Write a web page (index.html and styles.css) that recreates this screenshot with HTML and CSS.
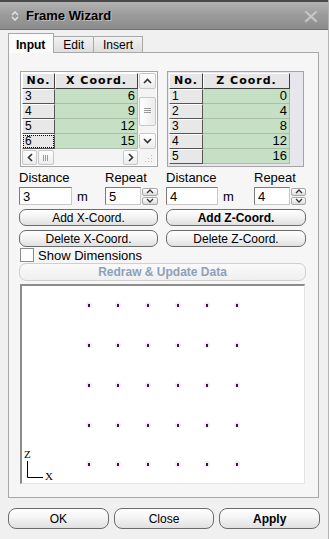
FILE: index.html
```html
<!DOCTYPE html>
<html>
    <head>
        <meta charset="utf-8" />
        <title>Frame Wizard</title>
        <link rel="stylesheet" href="styles.css">
    </head>
    <body>
        <div class="window">
            <div class="titlebar">
                <svg class="title-icon" width="8" height="12" viewBox="0 0 8 12">
                    <polyline points="1,5 4,2 7,5" fill="none" stroke="#e8e8e8" stroke-width="1.4" />
                    <polyline points="1,7 4,10 7,7" fill="none" stroke="#e8e8e8" stroke-width="1.4" />
                </svg>
                <span class="title">Frame Wizard</span>
                <svg class="title-close" width="14" height="13" viewBox="0 0 14 13">
                    <path d="M2,2 L12,11 M12,2 L2,11" stroke="#b8b8b8" stroke-width="2.6" stroke-linecap="square" />
                    <path d="M2,2 L12,11 M12,2 L2,11" stroke="#d4d4d4" stroke-width="1" />
                </svg>
            </div>

            <div class="tabs">
                <div class="tab selected">Input</div>
                <div class="tab">Edit</div>
                <div class="tab">Insert</div>
            </div>

            <div class="panel">
                <div class="columns">
                    <div class="col">
                        <div class="grid grid-x">
                            <div class="hcell">No.</div>
                            <div class="hcell">X Coord.</div>
                            <div class="vscroll">
                                <div class="sbtn">
                                    <svg width="9" height="6" viewBox="0 0 9 6"><polyline points="1,5 4.5,1.5 8,5" fill="none" stroke="#333" stroke-width="1.6" /></svg>
                                </div>
                                <div class="strack">
                                    <div class="sthumb">
                                        <svg width="7" height="6" viewBox="0 0 7 6"><path d="M0,0.5h7M0,2.5h7M0,4.5h7" stroke="#999" /></svg>
                                    </div>
                                </div>
                                <div class="sbtn">
                                    <svg width="9" height="6" viewBox="0 0 9 6"><polyline points="1,1 4.5,4.5 8,1" fill="none" stroke="#333" stroke-width="1.6" /></svg>
                                </div>
                            </div>
                            <div class="ncell">3</div><div class="vcell">6</div>
                            <div class="ncell">4</div><div class="vcell">9</div>
                            <div class="ncell">5</div><div class="vcell">12</div>
                            <div class="ncell focus">6</div><div class="vcell">15</div>
                            <div class="hscroll">
                                <div class="sbtn">
                                    <svg width="6" height="9" viewBox="0 0 6 9"><polyline points="5,1 1.5,4.5 5,8" fill="none" stroke="#333" stroke-width="1.6" /></svg>
                                </div>
                                <div class="hthumb">
                                    <svg width="6" height="6" viewBox="0 0 6 6"><path d="M0.5,0v6M2.5,0v6M4.5,0v6" stroke="#999" /></svg>
                                </div>
                                <div class="htrack"></div>
                                <div class="sbtn">
                                    <svg width="6" height="9" viewBox="0 0 6 9"><polyline points="1,1 4.5,4.5 1,8" fill="none" stroke="#333" stroke-width="1.6" /></svg>
                                </div>
                            </div>
                            <div class="grip">
                                <svg width="8" height="8" viewBox="0 0 8 8">
                                    <path d="M6,1h1v1h-1zM3,4h1v1h-1zM6,4h1v1h-1zM0,7h1v1h-1zM3,7h1v1h-1zM6,7h1v1h-1z" fill="#c0c0c0" />
                                </svg>
                            </div>
                        </div>

                        <div class="fields">
                            <span class="lbl wide">Distance</span>
                            <span class="lbl wide">Repeat</span>
                            <input class="field" type="text" value="3">
                            <span class="unit">m</span>
                            <input class="field" type="text" value="5">
                            <div class="spin">
                                <div class="spin-btn"><svg width="8" height="5" viewBox="0 0 8 5"><polyline points="1,4 4,1 7,4" fill="none" stroke="#333" stroke-width="1.3" /></svg></div>
                                <div class="spin-btn"><svg width="8" height="5" viewBox="0 0 8 5"><polyline points="1,1 4,4 7,1" fill="none" stroke="#333" stroke-width="1.3" /></svg></div>
                            </div>
                        </div>
                        <button class="btn">Add X-Coord.</button>
                        <button class="btn">Delete X-Coord.</button>
                    </div>

                    <div class="col">
                        <div class="grid grid-z">
                            <div class="hcell">No.</div>
                            <div class="hcell">Z Coord.</div>
                            <div class="filler"></div>
                            <div class="ncell">1</div><div class="vcell">0</div>
                            <div class="ncell">2</div><div class="vcell">4</div>
                            <div class="ncell">3</div><div class="vcell">8</div>
                            <div class="ncell">4</div><div class="vcell">12</div>
                            <div class="ncell">5</div><div class="vcell">16</div>
                        </div>

                        <div class="fields fields-z">
                            <span class="lbl wide">Distance</span>
                            <span class="lbl wide">Repeat</span>
                            <input class="field" type="text" value="4">
                            <span class="unit">m</span>
                            <input class="field" type="text" value="4">
                            <div class="spin">
                                <div class="spin-btn"><svg width="8" height="5" viewBox="0 0 8 5"><polyline points="1,4 4,1 7,4" fill="none" stroke="#333" stroke-width="1.3" /></svg></div>
                                <div class="spin-btn"><svg width="8" height="5" viewBox="0 0 8 5"><polyline points="1,1 4,4 7,1" fill="none" stroke="#333" stroke-width="1.3" /></svg></div>
                            </div>
                        </div>
                        <button class="btn default">Add Z-Coord.</button>
                        <button class="btn">Delete Z-Coord.</button>
                    </div>
                </div>

                <label class="check">
                    <span class="check-box"></span>
                    Show Dimensions
                </label>

                <button class="btn redraw" disabled>Redraw &amp; Update Data</button>

                <div class="canvas">
                    <svg width="282" height="197" viewBox="0 0 282 197">
                        <g id="dots"></g>
                        <text x="2" y="172" class="axis">Z</text>
                        <polyline points="5.5,175 5.5,191.5 21,191.5" fill="none" stroke="#000" stroke-width="1" />
                        <text x="23" y="194" class="axis">X</text>
                    </svg>
                </div>
            </div>

            <div class="actions">
                <button class="btn action">OK</button>
                <button class="btn action">Close</button>
                <button class="btn action default">Apply</button>
            </div>
        </div>

        <script>
const xs = [66, 95, 125, 155, 184, 214]
const zs = [18, 58, 98, 138, 177]
const dots = document.getElementById('dots')
let svg = ''
zs.forEach((z) => {
    xs.forEach((x) => {
        svg += '<circle cx="' + (x + 1) + '" cy="' + (z + 1) + '" r="3" fill="#f6e8f6" />'
        svg += '<rect x="' + x + '" y="' + z + '" width="2" height="3" fill="#3c1840" />'
    })
})
dots.innerHTML = svg
        </script>
    </body>
</html>
```

FILE: styles.css
```css
html, body { margin: 0; padding: 0; width: 100%; height: 100%; overflow: hidden }
body {
    background: #f0f0f0;
    font-family: 'Liberation Sans', Arial, sans-serif;
    font-size: 12px;
    color: #000;
}

.window {
    width: 329px;
    height: 539px;
    box-sizing: border-box;
    border-right: 1px solid #b4b4b4;
}

/* title bar */
.titlebar {
    height: 30px;
    box-sizing: border-box;
    border-top: 2px solid #4a4a4a;
    border-bottom: 1px solid #727272;
    background: linear-gradient(#b2b2b2, #9a9a9a 50%, #8c8c8c);
    display: flex;
    align-items: center;
    padding: 0 10px 0 10px;
}
.title-icon {
    margin: 1px 7px 0 1px;
}
.title {
    font-weight: bold;
    font-size: 13px;
    text-shadow: 1px 1px 0 #c0c0c0;
    flex: 1;
}
.title-close {
    margin-top: 2px;
}

/* tabs */
.tabs {
    display: flex;
    align-items: flex-end;
    padding-left: 8px;
    margin-top: 2px;
    height: 20px;
}
.tab {
    height: 16px;
    box-sizing: border-box;
    padding: 1px 9px 0 9px;
    border: 1px solid #a8a8a8;
    border-bottom: none;
    border-left: none;
    background: linear-gradient(#f2f2f2, #dedede);
    font-size: 12px;
    line-height: 14px;
}
.tab.selected {
    height: 20px;
    border-left: 1px solid #a8a8a8;
    background: #fbfbfb;
    font-weight: bold;
    padding: 4px 8px 0 7px;
    margin-bottom: -1px;
    position: relative;
    z-index: 1;
}

/* tab page */
.panel {
    margin: 0 9px 0 8px;
    height: 446px;
    box-sizing: border-box;
    border: 1px solid #a8a8a8;
    background: #f6f6f6;
    padding: 18px 13px 0 10px;
}
.columns {
    display: flex;
    gap: 8px;
}
.col {
    display: flex;
    flex-direction: column;
}
.col:first-child { width: 139px }
.col:last-child { width: 140px }

/* coordinate grids */
.grid {
    display: grid;
    height: 96px;
    box-sizing: border-box;
    border: 1px solid #a4a4a4;
    padding: 1px;
    background: #fff;
}
.grid-x {
    margin-left: 1px;
    grid-template-columns: 33px 83px 18px;
    grid-template-rows: 16px repeat(4, 15px) 1fr;
}
.grid-z {
    margin-left: 1px;
    width: 137px;
    grid-template-columns: 34px 87px 1fr;
    grid-template-rows: 16px repeat(5, 15px);
    background: #e6e6ec;
}
.hcell {
    background: #e6e6e6;
    border-top: 1px solid #fff;
    border-left: 1px solid #fff;
    border-right: 1px solid #404040;
    border-bottom: 1px solid #404040;
    font-family: 'DejaVu Sans', sans-serif;
    font-weight: bold;
    font-size: 11px;
    letter-spacing: 1px;
    text-align: center;
    line-height: 14px;
}
.ncell {
    background: #e8e8e8;
    border-top: 1px solid #fff;
    border-left: 1px solid #fff;
    border-right: 1px solid #555;
    border-bottom: 1px solid #555;
    padding-left: 2px;
    line-height: 13px;
    font-size: 12px;
}
.ncell.focus {
    outline: 1px dotted #000;
    outline-offset: -2px;
}
.vcell {
    background: #c5e0c5;
    border-bottom: 1px solid #a9bfa9;
    border-right: 1px solid #a9bfa9;
    text-align: right;
    padding-right: 2px;
    line-height: 14px;
    font-size: 13px;
}
.filler {
    grid-row: 1 / span 6;
    grid-column: 3;
    background: #e6e6ec;
}

/* scrollbars */
.vscroll {
    grid-column: 3;
    grid-row: 1 / span 5;
    display: flex;
    flex-direction: column;
    background: #f4f4f4;
    padding-left: 1px;
}
.sbtn {
    background: linear-gradient(#ffffff, #ececec);
    border: 1px solid #c8c8c8;
    border-radius: 2px;
    display: flex;
    align-items: center;
    justify-content: center;
}
.vscroll .sbtn { height: 14px }
.strack {
    flex: 1;
    display: flex;
    align-items: center;
    padding: 1px 0;
}
.sthumb {
    flex: 1;
    height: 27px;
    background: linear-gradient(90deg, #ffffff, #ececec);
    border: 1px solid #c8c8c8;
    border-radius: 2px;
    display: flex;
    align-items: center;
    justify-content: center;
}
.hscroll {
    grid-column: 1 / span 2;
    display: flex;
    background: #f4f4f4;
    padding-top: 1px;
}
.hscroll .sbtn { width: 13px }
.hthumb {
    width: 14px;
    margin-left: 1px;
    background: linear-gradient(#ffffff, #ececec);
    border: 1px solid #c8c8c8;
    border-radius: 2px;
    display: flex;
    align-items: center;
    justify-content: center;
}
.htrack { flex: 1 }
.grip {
    display: flex;
    align-items: flex-end;
    justify-content: flex-end;
    padding: 0 3px 3px 0;
    background: #f4f4f4;
}

/* distance / repeat */
.fields {
    display: grid;
    grid-template-columns: 53px 33px 36px 17px;
    grid-template-rows: 15px 18px;
    row-gap: 2px;
    margin-top: 3px;
    align-items: center;
}
.fields-z {
    grid-template-columns: 52px 36px 36px 16px;
}
.lbl {
    font-size: 13px;
    line-height: 15px;
}
.lbl.wide { grid-column: span 2 }
.field {
    box-sizing: border-box;
    height: 18px;
    width: 100%;
    border: 1px solid #7c7c7c;
    border-right-color: #c8c8c8;
    border-bottom-color: #c8c8c8;
    padding: 0 3px;
    margin: 0;
    font-family: 'Liberation Sans', Arial, sans-serif;
    font-size: 13px;
    background: #fff;
}
.unit {
    font-size: 13px;
    padding-left: 5px;
}
.spin {
    height: 17px;
    display: flex;
    flex-direction: column;
    gap: 1px;
    padding-left: 1px;
}
.spin-btn {
    flex: 1;
    background: linear-gradient(#ffffff, #dcdcdc);
    border: 1px solid #a8a8a8;
    border-radius: 2px;
    display: flex;
    align-items: center;
    justify-content: center;
}

/* buttons */
.btn {
    box-sizing: border-box;
    height: 17px;
    margin: 4px 0 0 0;
    padding: 0;
    border: 1px solid #6c6c6c;
    border-radius: 7px;
    background: linear-gradient(#ffffff, #f4f4f4 45%, #e0e0e0);
    font-family: 'Liberation Sans', Arial, sans-serif;
    font-size: 12px;
    line-height: 14px;
    color: #000;
}
.btn.default { font-weight: bold }
.redraw {
    width: 287px;
    height: 18px;
    margin-top: 1px;
    border-color: #cfcfcf;
    background: linear-gradient(#fafafa, #efefef);
    color: #8ea0b8;
    font-weight: bold;
}

.check {
    display: flex;
    align-items: center;
    gap: 4px;
    margin: 1px 0 0 1px;
    height: 14px;
    font-size: 13px;
}
.check-box {
    width: 12px;
    height: 12px;
    background: #fff;
    border: 1px solid #8c8c8c;
}

/* drawing */
.canvas {
    margin: 3px 0 0 1px;
    width: 285px;
    height: 200px;
    box-sizing: border-box;
    background: #fff;
    border-top: 2px solid #8c8c8c;
    border-left: 2px solid #8c8c8c;
    border-right: 1px solid #e4e4e4;
    border-bottom: 1px solid #e4e4e4;
}
.canvas svg { display: block }
.axis {
    font-family: 'Liberation Serif', serif;
    font-size: 11px;
}

/* dialog buttons */
.actions {
    display: flex;
    gap: 5px;
    margin: 10px 8px 0 8px;
}
.btn.action {
    flex: 1;
    height: 21px;
    margin: 0;
    border-radius: 8px;
    font-size: 12px;
}
```
